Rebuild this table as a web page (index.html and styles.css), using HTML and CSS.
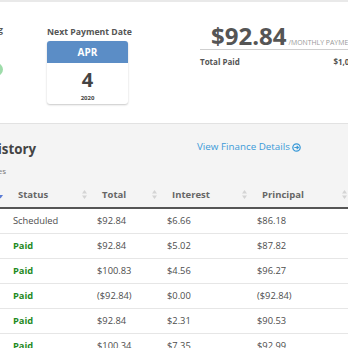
FILE: index.html
```html
<!DOCTYPE html>
<html>
<head>
<meta charset="utf-8">
<link rel="stylesheet" href="styles.css">
</head>
<body>
<div class="page">
  <section class="summary">
    <div class="stub">
      <div class="stub-label">Autopay Billing</div>
      <div class="toggle"></div>
    </div>
    <div class="next">
      <div class="next-label">Next Payment Date</div>
      <div class="cal">
        <div class="cal-month">APR</div>
        <div class="cal-day">
          <div class="day">4</div>
          <div class="year">2020</div>
        </div>
      </div>
    </div>
    <div class="payment">
      <div class="amount"><span class="big">$92.84</span><span class="per">/Monthly Payment</span></div>
      <div class="paid-row"><span>Total Paid</span><span>$1,022.37</span></div>
    </div>
  </section>
  <section class="history">
    <div class="history-head">
      <div class="titles">
        <h2 class="title">Payment History</h2>
        <p class="subtitle">Past payments, charges and fees</p>
      </div>
      <a class="link">View Finance Details
        <svg class="link-icon" width="9" height="9" viewBox="0 0 10 10"><circle cx="5" cy="5" r="4.1" fill="none" stroke="#3b9ad8" stroke-width="1.4"/><path d="M2.6 5H7M5.2 3.1L7.1 5L5.2 6.9" fill="none" stroke="#3b9ad8" stroke-width="1.3"/></svg>
      </a>
    </div>
    <div class="table">
      <div class="row head">
        <div class="hcell first"><svg class="sort" width="5" height="9" viewBox="0 0 5 9"><path d="M2.5 8.5L0 5H5Z" fill="#5a7bd5"/></svg></div>
        <div class="hcell">Status<svg class="sort" width="5" height="9" viewBox="0 0 5 9"><path d="M2.5 0L5 3.5H0ZM2.5 9L0 5.5H5Z" fill="#d4d4d4"/></svg></div>
        <div class="hcell">Total<svg class="sort" width="5" height="9" viewBox="0 0 5 9"><path d="M2.5 0L5 3.5H0ZM2.5 9L0 5.5H5Z" fill="#d4d4d4"/></svg></div>
        <div class="hcell">Interest<svg class="sort" width="5" height="9" viewBox="0 0 5 9"><path d="M2.5 0L5 3.5H0ZM2.5 9L0 5.5H5Z" fill="#d4d4d4"/></svg></div>
        <div class="hcell">Principal<svg class="sort" width="5" height="9" viewBox="0 0 5 9"><path d="M2.5 0L5 3.5H0ZM2.5 9L0 5.5H5Z" fill="#d4d4d4"/></svg></div>
      </div>
      <div class="body">
        <div class="row"><div class="cell"></div><div class="cell">Scheduled</div><div class="cell">$92.84</div><div class="cell">$6.66</div><div class="cell">$86.18</div></div>
        <div class="row"><div class="cell"></div><div class="cell paid">Paid</div><div class="cell">$92.84</div><div class="cell">$5.02</div><div class="cell">$87.82</div></div>
        <div class="row"><div class="cell"></div><div class="cell paid">Paid</div><div class="cell">$100.83</div><div class="cell">$4.56</div><div class="cell">$96.27</div></div>
        <div class="row"><div class="cell"></div><div class="cell paid">Paid</div><div class="cell">($92.84)</div><div class="cell">$0.00</div><div class="cell">($92.84)</div></div>
        <div class="row"><div class="cell"></div><div class="cell paid">Paid</div><div class="cell">$92.84</div><div class="cell">$2.31</div><div class="cell">$90.53</div></div>
        <div class="row"><div class="cell"></div><div class="cell paid">Paid</div><div class="cell">$100.34</div><div class="cell">$7.35</div><div class="cell">$92.99</div></div>
      </div>
    </div>
  </section>
</div>
</body>
</html>
```
FILE: styles.css
```css
* { box-sizing: border-box; }
body {
  margin: 0;
  font-family: "Open Sans", "Liberation Sans", sans-serif;
  color: #555;
  background: #fff;
}
.page {
  width: 348px;
  height: 348px;
  overflow: hidden;
}
.summary {
  display: flex;
  height: 123px;
  border-top: 2px solid #e9e9e9;
}
.stub {
  width: 3px;
  flex-shrink: 0;
  margin-right: 44px;
  padding-top: 22px;
  display: flex;
  flex-direction: column;
  align-items: flex-end;
}
.stub-label {
  white-space: nowrap;
  font-size: 8.7px;
  font-weight: 700;
  line-height: 12px;
  color: #555;
}
.toggle {
  margin-top: 27px;
  width: 26px;
  height: 13px;
  border-radius: 7px;
  background: #9edcaa;
  flex-shrink: 0;
}
.next {
  width: 81px;
  flex-shrink: 0;
  padding-top: 24px;
}
.next-label {
  font-size: 8.7px;
  font-weight: 700;
  line-height: 12px;
  text-align: center;
  white-space: nowrap;
  color: #555;
  margin-bottom: 3px;
}
.cal {
  background: #fff;
  border-radius: 3px;
  box-shadow: 0 1px 2px rgba(0,0,0,0.22);
}
.cal-month {
  background: #5b8dc6;
  color: #fff;
  font-weight: 700;
  font-size: 10px;
  height: 22px;
  line-height: 22px;
  text-align: center;
  border-radius: 3px 3px 0 0;
}
.cal-day {
  height: 41px;
  display: flex;
  flex-direction: column;
  align-items: center;
}
.day {
  font-size: 20px;
  font-weight: 700;
  line-height: 26px;
  margin-top: 4px;
  color: #444;
}
.year {
  font-size: 6px;
  font-weight: 700;
  line-height: 8px;
  margin-top: 1px;
  color: #444;
}
.payment {
  width: 170px;
  flex-shrink: 0;
  margin-left: 72px;
  padding-top: 21px;
}
.amount {
  display: flex;
  align-items: baseline;
  padding-left: 11px;
  border-bottom: 1px solid #cfcfcf;
  white-space: nowrap;
}
.big {
  font-size: 24px;
  font-weight: 700;
  line-height: 26px;
  color: #555;
}
.per {
  font-size: 6.9px;
  text-transform: uppercase;
  color: #999;
  margin-left: 2px;
}
.paid-row {
  display: flex;
  justify-content: space-between;
  font-size: 8px;
  font-weight: 700;
  line-height: 12px;
  margin-top: 6px;
  color: #555;
}
.history {
  background: #f4f4f4;
  border-top: 1px solid #e2e2e2;
  height: 230px;
}
.history-head {
  display: flex;
  align-items: flex-start;
  padding-top: 16px;
}
.titles {
  width: 36px;
  flex-shrink: 0;
  display: flex;
  flex-direction: column;
  align-items: flex-end;
}
.title {
  margin: 0;
  font-size: 13.3px;
  font-weight: 700;
  line-height: 18px;
  color: #444;
  white-space: nowrap;
}
.subtitle {
  margin: 7px 30px 0 0;
  font-size: 8px;
  line-height: 11px;
  color: #777;
  white-space: nowrap;
}
.link {
  margin-left: 161px;
  font-size: 9.8px;
  line-height: 14px;
  color: #3b9ad8;
  display: flex;
  align-items: center;
  gap: 2px;
  white-space: nowrap;
  flex-shrink: 0;
}
.table {
  margin-top: 5px;
}
.row {
  display: grid;
  grid-template-columns: 8px 84px 70px 90px 100px;
}
.head {
  border-bottom: 2px solid #555;
}
.hcell {
  height: 26px;
  display: flex;
  align-items: center;
  justify-content: space-between;
  padding: 0 5px 0 10px;
  font-size: 9.5px;
  font-weight: 700;
  color: #666;
  white-space: nowrap;
}
.hcell.first {
  justify-content: flex-end;
  padding: 0 5px 0 0;
}
.sort {
  flex-shrink: 0;
}
.body {
  background: #fff;
}
.body .row {
  border-bottom: 1px solid #e6e6e6;
}
.cell {
  height: 24px;
  line-height: 24px;
  padding-left: 5px;
  font-size: 9.33px;
  color: #4d4d4d;
  white-space: nowrap;
}
.cell.paid {
  color: #1f8a1f;
  font-weight: 700;
}
```
